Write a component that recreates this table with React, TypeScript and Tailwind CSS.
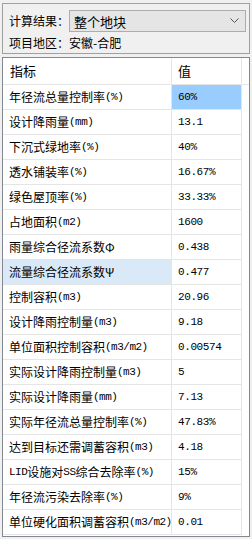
import React from "react";

type Row = { label: string; value: string; hlLabel?: boolean; hlValue?: boolean };

const rows: Row[] = [
  { label: "年径流总量控制率(%)", value: "60%", hlValue: true },
  { label: "设计降雨量(mm)", value: "13.1" },
  { label: "下沉式绿地率(%)", value: "40%" },
  { label: "透水铺装率(%)", value: "16.67%" },
  { label: "绿色屋顶率(%)", value: "33.33%" },
  { label: "占地面积(m2)", value: "1600" },
  { label: "雨量综合径流系数Φ", value: "0.438" },
  { label: "流量综合径流系数Ψ", value: "0.477", hlLabel: true },
  { label: "控制容积(m3)", value: "20.96" },
  { label: "设计降雨控制量(m3)", value: "9.18" },
  { label: "单位面积控制容积(m3/m2)", value: "0.00574" },
  { label: "实际设计降雨控制量(m3)", value: "5" },
  { label: "实际设计降雨量(mm)", value: "7.13" },
  { label: "实际年径流总量控制率(%)", value: "47.83%" },
  { label: "达到目标还需调蓄容积(m3)", value: "4.18" },
  { label: "LID设施对SS综合去除率(%)", value: "15%" },
  { label: "年径流污染去除率(%)", value: "9%" },
  { label: "单位硬化面积调蓄容积(m3/m2)", value: "0.01" },
];

const cjk = "font-['Noto_Sans_CJK_SC','Noto_Sans',sans-serif]";
const mono = "font-['Liberation_Mono','Noto_Sans_CJK_SC',monospace]";

// Latin runs inside a label are set in a narrow half-width mono face
function Label({ text }: { text: string }) {
  const parts = text.match(/[\x20-\x7e]+|[^\x20-\x7e]+/g) ?? [];
  return (
    <>
      {parts.map((p, i) =>
        /^[\x20-\x7e]+$/.test(p) ? (
          <span key={i} className={`${mono} text-[11px] tracking-[-0.5px]`}>
            {p}
          </span>
        ) : (
          <span key={i} className="text-[12px]">
            {p}
          </span>
        )
      )}
    </>
  );
}

export default function App() {
  return (
    <div className={`w-[252px] h-[539px] bg-[#f0f0f0] flex flex-col text-[#000] ${cjk}`}>
      {/* settings panel */}
      <div className="mt-[3px] mx-[2px] h-[51px] border border-[#a0a0a0] flex flex-col pl-[6px] pr-[3px] pt-[6px]">
        <div className="flex items-center h-[22px]">
          <span className="text-[12px] leading-none w-[60px] shrink-0 whitespace-nowrap">计算结果：</span>
          <div className="flex-1 h-[22px] bg-[#e5e5e5] border border-[#adadad] flex items-center pl-[4px] pr-[6px]">
            <span className="text-[13px] leading-none flex-1 whitespace-nowrap">整个地块</span>
            <svg width="9" height="6" viewBox="0 0 9 6" fill="none">
              <path d="M0.5 0.5 L4.5 4.5 L8.5 0.5" stroke="#555" strokeWidth="1" />
            </svg>
          </div>
        </div>
        <div className="flex items-center h-[22px] mt-[1px]">
          <span className="text-[12px] leading-none whitespace-nowrap">项目地区：安徽-合肥</span>
        </div>
      </div>

      {/* results grid */}
      <div className="mt-[3px] mx-[2px] h-[480px] border border-[#828790] bg-white flex flex-col overflow-hidden">
        <div className="grid grid-cols-[169px_70px_1fr] h-[27px]">
          <div className="border-r border-b border-[#e5e5e5] flex items-center pl-[7px] text-[13px]">指标</div>
          <div className="border-r border-b border-[#e5e5e5] flex items-center pl-[6px] text-[13px]">值</div>
          <div className="border-b border-[#e5e5e5]" />
        </div>
        {rows.map((r) => (
          <div key={r.label} className="grid grid-cols-[169px_70px_1fr] h-[25px]">
            <div
              className={`border-r border-b border-[#e5e5e5] flex items-center pl-[6px] whitespace-nowrap overflow-hidden ${
                r.hlLabel ? "bg-[#d9e9f8]" : ""
              }`}
            >
              <Label text={r.label} />
            </div>
            <div
              className={`border-r border-b border-[#e5e5e5] flex items-center pl-[6px] text-[11px] tracking-[-0.4px] ${mono} ${
                r.hlValue ? "bg-[#99ccff]" : ""
              }`}
            >
              {r.value}
            </div>
            <div />
          </div>
        ))}
      </div>
    </div>
  );
}
